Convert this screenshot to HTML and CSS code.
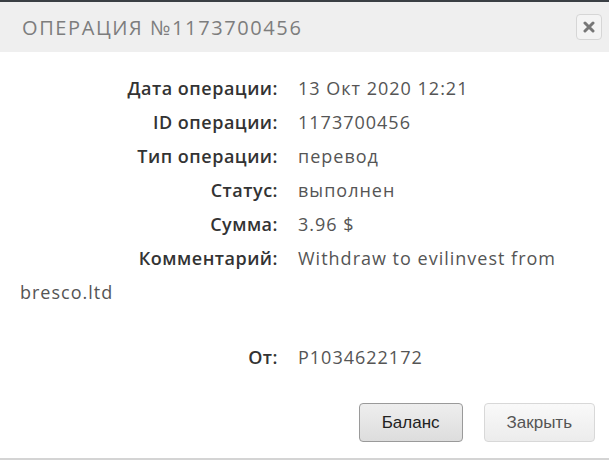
FILE: index.html
```html
<!DOCTYPE html>
<html lang="ru">
<head>
    <meta charset="UTF-8">
    <title>Операция №1173700456</title>
    <link rel="stylesheet" href="styles.css">
</head>
<body>

<div class="modal">
    <div class="modal-header">
        <h2>Операция №1173700456</h2>
        <button class="close" title="Закрыть">
            <svg width="12" height="12" viewBox="0 0 12 12"><path d="M2 2 L10 10 M10 2 L2 10" stroke="#777" stroke-width="3" stroke-linecap="round"/></svg>
        </button>
    </div>

    <div class="modal-body">
        <p class="row"><span class="label">Дата операции:</span>13 Окт 2020 12:21</p>
        <p class="row"><span class="label">ID операции:</span>1173700456</p>
        <p class="row"><span class="label">Тип операции:</span>перевод</p>
        <p class="row"><span class="label">Статус:</span>выполнен</p>
        <p class="row"><span class="label">Сумма:</span>3.96 $</p>
        <p class="row"><span class="label">Комментарий:</span>Withdraw to evilinvest from bresco.ltd</p>
        <p class="row row-gap"><span class="label">От:</span>P1034622172</p>
    </div>

    <div class="modal-footer">
        <button class="btn btn-primary">Баланс</button>
        <button class="btn">Закрыть</button>
    </div>
</div>

</body>
</html>
```

FILE: styles.css
```css
body {
    margin: 0;
    font-family: "Open Sans", sans-serif;
    background: #fff;
}
.modal {
    width: 609px;
    height: 460px;
    border-top: 2px solid #3a3f44;
    box-sizing: border-box;
    display: flex;
    flex-direction: column;
}
.modal-header {
    height: 50px;
    background: #efefef;
    display: flex;
    align-items: center;
    justify-content: space-between;
    padding: 0 7px 0 22px;
}
.modal-header h2 {
    margin: 0;
    font-size: 20px;
    font-weight: 400;
    letter-spacing: 1.6px;
    color: #7d7d7d;
    text-transform: uppercase;
}
.close {
    width: 26px;
    height: 26px;
    padding: 0;
    display: flex;
    align-items: center;
    justify-content: center;
    background: #f4f4f4;
    border: 1px solid #d6d6d6;
    border-radius: 4px;
}
.modal-body {
    flex: 1;
    padding: 19px 20px 0;
}
.row {
    margin: 0;
    font-size: 18px;
    line-height: 34px;
    letter-spacing: 1px;
    color: #555;
}
.row-gap {
    margin-top: 31px;
}
.label {
    display: inline-block;
    width: 258px;
    margin-right: 20px;
    text-align: right;
    font-weight: 600;
    letter-spacing: 0.5px;
    color: #333;
}
.modal-footer {
    display: flex;
    justify-content: flex-end;
    gap: 21px;
    padding: 0 14px 0 0;
    height: 55px;
    border-bottom: 2px solid #d4d4d4;
}
.btn {
    height: 39px;
    padding: 0 22px;
    font-family: "Liberation Sans", Arial, sans-serif;
    font-size: 17px;
    color: #555;
    background: linear-gradient(#f9f9f9, #ececec);
    border: 1px solid #d8d8d8;
    border-radius: 4px;
}
.btn-primary {
    color: #222;
    background: linear-gradient(#eeeeee, #dddddd);
    border-color: #9a9a9a;
}
```
